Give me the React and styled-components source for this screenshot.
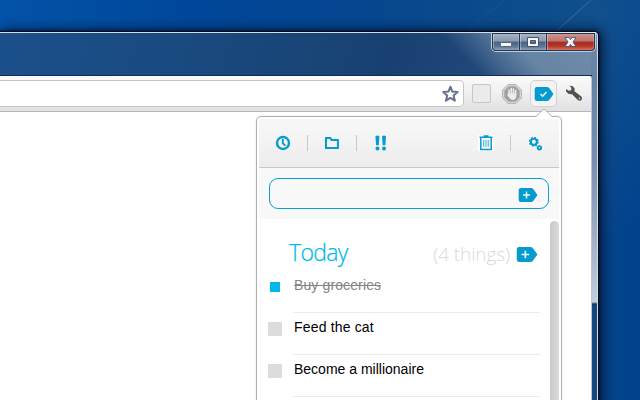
import React from "react";
import styled, { createGlobalStyle } from "styled-components";

const GlobalStyle = createGlobalStyle`
  * { box-sizing: border-box; }
  html, body { margin: 0; overflow: hidden; }
`;

const Desktop = styled.main`
  position: relative;
  width: 640px;
  height: 400px;
  overflow: hidden;
  padding-top: 31px;
  font-family: "Liberation Sans", Arial, sans-serif;
  background:
    radial-gradient(circle at 600px 12px, rgba(24, 88, 143, 0.55), rgba(20, 80, 140, 0) 230px),
    linear-gradient(90deg, #0353a9 0, #00479a 190px, #07468c 420px, #074489 600px, #00418e 640px);
`;

const LightStreak = styled.svg`
  position: absolute;
  left: 440px;
  top: 0;
`;

const Window = styled.section`
  position: relative;
  width: 599px;
  height: 379px;
  border: solid #030b1a;
  border-width: 1px 1px 0 0;
  border-radius: 0 5px 0 0;
  background: #1b487d;
  box-shadow: 0 0 3px rgba(0, 0, 0, 0.7), 2px 0 12px 1px rgba(0, 10, 35, 0.8);
`;

const Frame = styled.div`
  height: 100%;
  border: solid #d3dce7;
  border-width: 1px 1px 0 0;
  border-radius: 0 4px 0 0;
  padding-right: 5px;
  background:
    linear-gradient(rgba(108, 136, 168, 0) 0, #6482a5 45px, #7890b0 130px, #c0ccdb 269px, #1a3864 271px, #14467f 273px) right top / 6px 100% no-repeat,
    linear-gradient(45deg, rgba(112, 140, 169, 0) 0, rgba(112, 140, 169, 0) 36%, rgba(112, 140, 169, 0.3) 45%, rgba(112, 140, 169, 0.85) 62%, #708cab 100%) right top / 200px 45px no-repeat,
    linear-gradient(100deg, #1c508a 0, #194a80 180px, #184171 390px, #1f4778 470px, #3d618c 598px);
`;

const TitleBar = styled.header`
  height: 43px;
  display: flex;
  justify-content: flex-end;
  align-items: flex-start;
  border-bottom: 1px solid #122c55;
`;

const Controls = styled.div`
  display: flex;
  height: 20px;
  margin: -1px -4px 0 0;
  border: 1px solid #c3cedd;
  border-top-color: #e3e9ef;
  border-radius: 0 0 5px 5px;
  overflow: hidden;
  box-shadow: inset 0 0 0 1px #1d304e;
`;

const Control = styled.button`
  width: ${({ $width }) => $width}px;
  height: 18px;
  display: flex;
  align-items: center;
  justify-content: center;
  padding: 0 0 1px;
  border: 1px solid #223656;
  border-left-width: ${({ $first }) => ($first ? 1 : 0)}px;
  border-radius: ${({ $first, $danger }) => ($first ? "0 0 0 4px" : $danger ? "0 0 4px 0" : 0)};
  background: ${({ $danger }) =>
    $danger
      ? "linear-gradient(#ca958f 0, #bf736b 45%, #a52c20 50%, #b43325 75%, #d5775e 100%)"
      : "linear-gradient(#a7b5c5 0, #8498ae 45%, #48617f 50%, #5e7899 80%, #90a5bc 100%)"};
  box-shadow: inset 1px 0 rgba(255, 255, 255, 0.35), inset -1px 0 rgba(255, 255, 255, 0.2);
`;

const Page = styled.div`
  width: 592px;
  height: 330px;
  border-right: 1px solid #b8c6d5;
  border-radius: 0 3px 0 0;
  background: #fff;
  overflow: hidden;
`;

const BrowserBar = styled.div`
  height: 36px;
  display: flex;
  align-items: center;
  background: linear-gradient(#fbfbfc, #eeeeee 55%, #e0e0e0);
  border-bottom: 1px solid #b4b5bb;
`;

const AddressBar = styled.div`
  width: 464px;
  height: 27px;
  margin-right: 8px;
  display: flex;
  align-items: center;
  justify-content: flex-end;
  padding-right: 4px;
  border: 1px solid #c4c4c6;
  border-left: 0;
  border-radius: 0 5px 5px 0;
  background: #fff;
`;

const EmptyExtension = styled.div`
  width: 19px;
  height: 19px;
  margin-right: 11px;
  border: 1px solid #c6c6c6;
  border-radius: 2px;
  background: #ebebeb;
`;

const ActiveExtension = styled.div`
  width: 27px;
  height: 27px;
  margin: 0 8px 0 8px;
  display: flex;
  align-items: center;
  justify-content: center;
  border: 1px solid #d2d2d3;
  border-radius: 5px;
  background: #f3f3f3;
`;

const Popup = styled.aside`
  position: absolute;
  left: 256px;
  top: 116px;
  width: 306px;
  height: 290px;
  padding: 2px;
  border: 1px solid #adafb1;
  border-radius: 5px;
  background: #fff;
  box-shadow: 0 0 2px rgba(0, 0, 0, 0.12);
`;

const PopupPointer = styled.svg`
  position: absolute;
  left: 278px;
  top: -9px;
`;

const PopupTools = styled.nav`
  height: 49px;
  display: flex;
  align-items: center;
  padding: 0 16px;
  background: linear-gradient(#f8f8f8, #ededed);
  border-bottom: 1px solid #c9c9c9;
`;

const ToolIcon = styled.svg`
  display: block;
  flex: none;
`;

const Divider = styled.span`
  width: 1px;
  height: 16px;
  margin: 0 16px;
  background: #c9c9c9;
`;

const Spacer = styled.span`
  flex: 1;
`;

const EntryArea = styled.div`
  height: 51px;
  padding: 10px;
  background: #f8f8f8;
`;

const EntryField = styled.div`
  height: 31px;
  display: flex;
  align-items: center;
  justify-content: flex-end;
  padding: 2px 10px 0 0;
  border: 1px solid #089fd2;
  border-radius: 9px;
`;

const ListArea = styled.div`
  height: 184px;
  display: flex;
  justify-content: space-between;
  padding-top: 2px;
`;

const List = styled.div`
  width: 281px;
  padding: 16px 0 0 9px;
`;

const Scrollbar = styled.div`
  width: 9px;
  border-radius: 5px 5px 0 0;
  background: linear-gradient(90deg, #c9c9c9, #dadada);
`;

const Heading = styled.div`
  height: 34px;
  display: flex;
  align-items: center;
  padding: 0 2px 0 21px;
  font-family: "Open Sans", sans-serif;
  font-weight: 300;
`;

const DayTitle = styled.h1`
  flex: 1;
  margin: -4px 0 0;
  font-size: 23px;
  line-height: 30px;
  font-weight: 300;
  letter-spacing: -0.65px;
  color: #00b9e8;
  -webkit-text-stroke: 0.25px #00b9e8;
`;

const Count = styled.span`
  margin: 0 6px 0 0;
  font-size: 19px;
  line-height: 28px;
  letter-spacing: -0.12px;
  color: #d9d9dc;
`;

const Task = styled.div`
  height: 42px;
  display: flex;
  align-items: flex-start;
`;

const Checkbox = styled.span`
  width: ${({ $done }) => ($done ? 10 : 14)}px;
  height: ${({ $done }) => ($done ? 10 : 14)}px;
  margin: ${({ $done }) => ($done ? "11px 13px 0 2px" : "9px 11px 0 0")};
  background: ${({ $done }) => ($done ? "#00b9e9" : "#dcdcdc")};
`;

const TaskText = styled.div`
  flex: 1;
  height: 42px;
  padding: 5px 0 0 1px;
  border-bottom: 1px solid #ebebeb;
  font-size: 14px;
  line-height: 18px;
  letter-spacing: ${({ $tracking }) => $tracking}px;
  color: ${({ $done }) => ($done ? "#858585" : "#000")};
  text-decoration: ${({ $done }) => ($done ? "line-through" : "none")};
`;

const tasks = [
  { text: "Buy groceries", done: true, tracking: 0.12 },
  { text: "Feed the cat", tracking: 0.17 },
  { text: "Become a millionaire", tracking: 0 },
];

function Tag({ check, large }) {
  return (
    <ToolIcon width={large ? 22 : 20} height={large ? 15 : 14} viewBox="0 0 20 14" preserveAspectRatio="none">
      <path d="M3 0H13Q14.3 0 15.2 1L19.5 7L15.2 13Q14.3 14 13 14H3Q.7 14 .7 11.7V2.3Q.7 0 3 0Z" fill="#069bcf" />
      <path d={check ? "M6.5 7l2.2 2.1 3.8-4" : "M5 7h7M8.5 3.5v7"} fill="none" stroke="#e5f7fc" strokeWidth="1.5" />
    </ToolIcon>
  );
}

function Wrench() {
  return (
    <ToolIcon width="18" height="18" viewBox="0 0 18 18">
      <path d="M4.5.7 7.4 1 9.6 3.3 9.5 6.2 16.3 11.5Q17.8 13.1 16.5 14.8T12.8 15.1L7 9.3 3.8 9 1.1 6.6 1 4 3.8 5.8 6.2 5.2 6.3 2.7Z" fill="#515151" />
      <circle cx="14.4" cy="13.4" r=".8" fill="#d5d5d5" />
    </ToolIcon>
  );
}

function Hand() {
  return (
    <ToolIcon width="20" height="20" viewBox="0 0 20 20">
      <path d="M6 .7h8L19.3 6v8L14 19.3H6L.7 14V6Z" fill="#dedede" stroke="#a9a9a9" />
      <path d="M6.6 2.3h6.8l4.3 4.3v6.8l-4.3 4.3H6.6l-4.3-4.3V6.6Z" fill="#a0a0a0" />
      <path d="M7 12V6m2.2 5V4.5m2.2 6.5V5m2.2 6V6.5" fill="none" stroke="#efefef" strokeWidth="1.5" strokeLinecap="round" />
      <path d="M6.2 9.5h8.1V12Q14 16 10.5 16 8.2 16 6.8 13L5 10.5Q5.2 9.4 6.5 10.7Z" fill="#ececec" />
    </ToolIcon>
  );
}

export default function App() {
  return (
    <>
      <GlobalStyle />
      <Desktop>
        <LightStreak width="200" height="34">
          <path d="M28 29 65 0" stroke="#5ba1ca" strokeWidth="2" opacity=".05" />
          <path d="M114 33 151 0" stroke="#8dbad3" strokeWidth="1" opacity=".32" />
        </LightStreak>
        <Window>
          <Frame>
            <TitleBar>
              <Controls>
                <Control $width={28} $first aria-label="Minimize">
                  <ToolIcon width="14" height="12"><rect x="1.5" y="6.5" width="11" height="4" rx="1" fill="#f5f5f5" stroke="#53637a" /></ToolIcon>
                </Control>
                <Control $width={27} aria-label="Maximize">
                  <ToolIcon width="14" height="12"><path d="M1.5 1.5h11v9h-11zM4.5 4.5h5v3h-5z" fill="#f5f5f5" fillRule="evenodd" stroke="#46546d" /></ToolIcon>
                </Control>
                <Control $width={48} $danger aria-label="Close">
                  <ToolIcon width="13" height="12"><path d="M1 1.5h4l1.5 2 1.5-2h4L9 6l3 4.5H8l-1.5-2-1.5 2H1L4 6Z" fill="#f7f7f7" stroke="#535c73" /></ToolIcon>
                </Control>
              </Controls>
            </TitleBar>
            <Page>
              <BrowserBar>
                <AddressBar>
                  <ToolIcon width="18" height="18" viewBox="0 0 18 18">
                    <path d="m9.4 1.7 1.9 4.9 5.3.4-4 3.5 1.3 5.2-4.5-2.8L4.9 15.7l1.3-5.2-4-3.5 5.3-.4Z" fill="#fff" stroke="#68728e" strokeWidth="2" strokeLinejoin="round" />
                  </ToolIcon>
                </AddressBar>
                <EmptyExtension />
                <Hand />
                <ActiveExtension><Tag check /></ActiveExtension>
                <Wrench />
              </BrowserBar>
            </Page>
          </Frame>
        </Window>
        <Popup>
          <PopupPointer width="18" height="10">
            <path d="M1 8.5 9 .8l8 7.7V10H1Z" fill="#fff" />
            <path d="M0 8.5h1L9 .8l8 7.7h1" fill="none" stroke="#adafb1" />
          </PopupPointer>
          <PopupTools>
            <ToolIcon width="16" height="16">
              <circle cx="8" cy="8" r="6" fill="none" stroke="#069bcf" strokeWidth="2.4" />
              <path d="M7.8 4v4.2l2.6 2.4" fill="none" stroke="#069bcf" strokeWidth="1.9" />
            </ToolIcon>
            <Divider />
            <ToolIcon width="16" height="16">
              <path d="M2 3h4.3l1.2 2h6.4v8H2Z" fill="none" stroke="#069bcf" strokeWidth="2" />
            </ToolIcon>
            <Divider />
            <ToolIcon width="16" height="16">
              <path d="M2.4 1.5Q4.4-.3 6.4 1.5L5.8 10.3H3.1ZM9 1.5Q11-.3 13 1.5L12.4 10.3H9.7Z" fill="#069bcf" />
              <circle cx="4.5" cy="13.4" r="2" fill="#069bcf" /><circle cx="11" cy="13.4" r="2" fill="#069bcf" />
            </ToolIcon>
            <Spacer />
            <ToolIcon width="16" height="16">
              <path d="M0 0h16v16H0z" fill="#fff" />
              <path d="M1.5 2.3h13M5.5 1h5M2.8 2.5v12h10.4v-12" fill="none" stroke="#069bcf" strokeWidth="1.5" />
              <path d="M5.5 4.8v7M7.2 4.8v7M8.9 4.8v7M10.6 4.8v7" stroke="#38add7" strokeWidth=".8" />
            </ToolIcon>
            <Divider />
            <ToolIcon width="16" height="16">
              <circle cx="6.8" cy="6.8" r="3.1" fill="none" stroke="#069bcf" strokeWidth="2" />
              <circle cx="6.8" cy="6.8" r="4.3" fill="none" stroke="#069bcf" strokeWidth="1.4" strokeDasharray="1.69 1.69" />
              <circle cx="12.4" cy="12.8" r="1.7" fill="none" stroke="#069bcf" strokeWidth="1.9" />
            </ToolIcon>
          </PopupTools>
          <EntryArea><EntryField><Tag /></EntryField></EntryArea>
          <ListArea>
            <List>
              <Heading><DayTitle>Today</DayTitle><Count>(4 things)</Count><Tag large /></Heading>
              {tasks.map(task => (
                <Task key={task.text}>
                  <Checkbox $done={task.done} />
                  <TaskText $done={task.done} $tracking={task.tracking}>{task.text}</TaskText>
                </Task>
              ))}
            </List>
            <Scrollbar />
          </ListArea>
        </Popup>
      </Desktop>
    </>
  );
}
